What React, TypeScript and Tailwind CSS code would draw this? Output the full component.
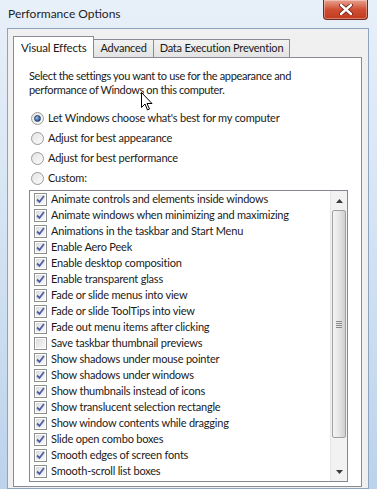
import React from "react";

const effects: { label: string; checked: boolean }[] = [
  { label: "Animate controls and elements inside windows", checked: true },
  { label: "Animate windows when minimizing and maximizing", checked: true },
  { label: "Animations in the taskbar and Start Menu", checked: true },
  { label: "Enable Aero Peek", checked: true },
  { label: "Enable desktop composition", checked: true },
  { label: "Enable transparent glass", checked: true },
  { label: "Fade or slide menus into view", checked: true },
  { label: "Fade or slide ToolTips into view", checked: true },
  { label: "Fade out menu items after clicking", checked: true },
  { label: "Save taskbar thumbnail previews", checked: false },
  { label: "Show shadows under mouse pointer", checked: true },
  { label: "Show shadows under windows", checked: true },
  { label: "Show thumbnails instead of icons", checked: true },
  { label: "Show translucent selection rectangle", checked: true },
  { label: "Show window contents while dragging", checked: true },
  { label: "Slide open combo boxes", checked: true },
  { label: "Smooth edges of screen fonts", checked: true },
  { label: "Smooth-scroll list boxes", checked: true },
];

const radios = [
  "Let Windows choose what's best for my computer",
  "Adjust for best appearance",
  "Adjust for best performance",
  "Custom:",
];

function Radio({ on }: { on: boolean }) {
  return (
    <span className="flex h-[13px] w-[13px] shrink-0 items-center justify-center rounded-full border border-[#9a9a9a] bg-gradient-to-br from-[#e4e4e4] to-[#fbfbfb]">
      {on && (
        <span className="h-[7px] w-[7px] rounded-full border border-[#25406e] bg-[radial-gradient(circle_at_35%_35%,#9ec3ea,#2b5a96_70%)]" />
      )}
    </span>
  );
}

function Check({ on }: { on: boolean }) {
  return (
    <span className="flex h-[13px] w-[13px] shrink-0 items-center justify-center border border-[#8e8f8f] bg-white p-[1px]">
      <span className="flex h-full w-full items-center justify-center bg-gradient-to-br from-[#dcdcdc] to-[#f8f8f8]">
        {on && (
          <svg width="9" height="9" viewBox="0 0 9 9">
            <path d="M1 4.5 L3.5 7 L8 1" fill="none" stroke="#4b5ea6" strokeWidth="1.8" />
          </svg>
        )}
      </span>
    </span>
  );
}

function Scrollbar() {
  return (
    <div className="flex w-[17px] shrink-0 flex-col border-l border-[#e6e6e6] bg-[#f2f2f2]">
      <div className="flex h-[19px] items-center justify-center">
        <svg width="7" height="4" viewBox="0 0 7 4">
          <path d="M0 4 L3.5 0 L7 4 Z" fill="#3c3c3c" />
        </svg>
      </div>
      <div className="mx-[1px] flex h-[228px] items-center justify-center rounded-[2px] border border-[#a0a0a0] bg-gradient-to-r from-[#f4f4f4] via-[#e6e6e6] to-[#cfcfcf]">
        <div className="flex flex-col gap-[1px]">
          <span className="h-px w-[6px] bg-[#8a8a8a]" />
          <span className="h-px w-[6px] bg-[#8a8a8a]" />
          <span className="h-px w-[6px] bg-[#8a8a8a]" />
          <span className="h-px w-[6px] bg-[#8a8a8a]" />
        </div>
      </div>
      <div className="flex-1" />
      <div className="flex h-[19px] items-center justify-center">
        <svg width="7" height="4" viewBox="0 0 7 4">
          <path d="M0 0 L3.5 4 L7 0 Z" fill="#3c3c3c" />
        </svg>
      </div>
    </div>
  );
}

export default function App() {
  return (
    <div
      className="relative h-[489px] w-[377px] overflow-hidden bg-gradient-to-b from-[#e8f0f9] via-[#d3e2f2] to-[#bcd3eb] text-[11px] tracking-[-0.2px] text-[#1a1a1a]"
      style={{ fontFamily: 'Lato, "Segoe UI", sans-serif' }}
    >
      {/* title bar */}
      <div className="flex h-[28px] items-center justify-between pl-[8px] pr-[9px]">
        <span className="text-[12px] tracking-normal text-[#1e1e1e]">Performance Options</span>
        <div className="mb-[8px] flex h-[20px] w-[45px] items-center justify-center rounded-b-[4px] border border-t-0 border-[#6b2b22] bg-gradient-to-b from-[#e8a08e] via-[#cf4f33] to-[#c23a1d] shadow-[inset_0_0_0_1px_rgba(255,255,255,0.35)]">
          <svg width="14" height="11" viewBox="0 0 14 11">
            <path d="M2 1 L12 10 M12 1 L2 10" stroke="#5a1a10" strokeWidth="4" strokeLinecap="round" />
            <path d="M2 1 L12 10 M12 1 L2 10" stroke="#ffffff" strokeWidth="2.4" strokeLinecap="round" />
          </svg>
        </div>
      </div>

      {/* client area */}
      <div className="ml-[7px] mr-[8px] h-[461px] border border-[#8da4c0] bg-[#f0f0f0] pl-[5px] pr-[6px] pt-[7px]">
        {/* tabs */}
        <div className="flex items-end">
          <div className="relative z-10 -mb-px flex h-[22px] items-center border border-b-0 border-[#898c95] bg-white px-[7px] text-[11.5px]">
            Visual Effects
          </div>
          <div className="flex h-[18px] items-center border border-b-0 border-l-0 border-[#898c95] bg-gradient-to-b from-[#f2f2f2] to-[#e3e3e3] px-[6px]">
            Advanced
          </div>
          <div className="flex h-[18px] items-center border border-b-0 border-l-0 border-[#898c95] bg-gradient-to-b from-[#f2f2f2] to-[#e3e3e3] px-[6px]">
            Data Execution Prevention
          </div>
        </div>

        {/* tab page */}
        <div className="h-[430px] border border-[#898c95] bg-white pl-[15px] pr-[13px] pt-[11px]">
          <p className="whitespace-nowrap leading-[14px] tracking-[-0.35px]">
            Select the settings you want to use for the appearance and
            <br />
            performance of Windows on this computer.
          </p>

          <div className="mt-[15px] flex flex-col gap-[7px]">
            {radios.map((r, i) => (
              <div key={r} className="flex h-[13px] items-center gap-[4px] pl-[2px]">
                <Radio on={i === 0} />
                <span className="whitespace-nowrap">{r}</span>
              </div>
            ))}
          </div>

          <div className="mt-[5px] flex h-[292px] border border-[#828790] bg-white">
            <div className="flex min-w-0 flex-1 flex-col overflow-hidden pl-[4px]">
              {effects.map((e) => (
                <div key={e.label} className="flex h-[16px] items-center gap-[4px]">
                  <Check on={e.checked} />
                  <span className="whitespace-nowrap">{e.label}</span>
                </div>
              ))}
            </div>
            <Scrollbar />
          </div>
        </div>
      </div>

      {/* mouse pointer */}
      <svg className="absolute left-[141px] top-[92px]" width="12" height="19" viewBox="0 0 12 19">
        <path d="M0.5 0.5 L0.5 15.5 L4 12 L6.5 18 L8.5 17 L6 11.5 L11 11.5 Z" fill="#ffffff" stroke="#000000" strokeWidth="1" />
      </svg>
    </div>
  );
}
